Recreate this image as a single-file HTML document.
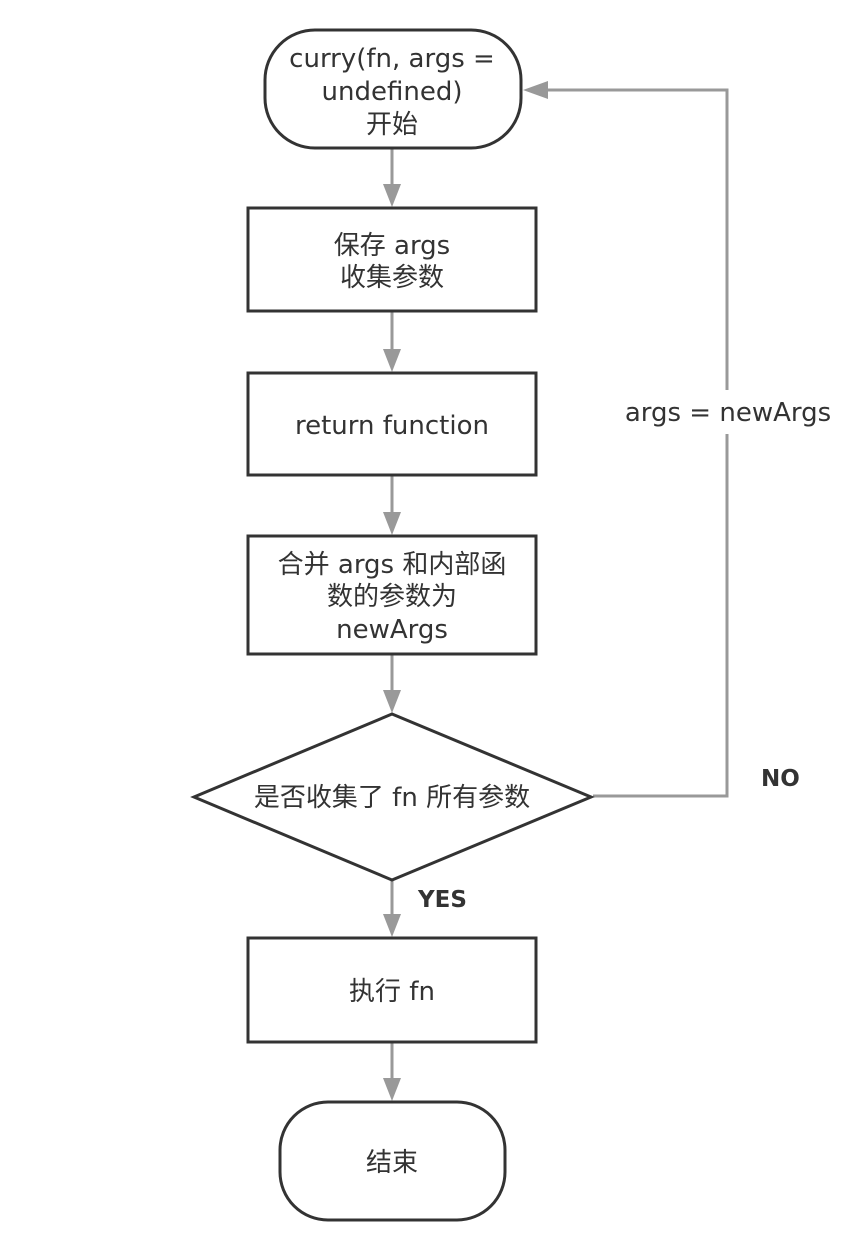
<!DOCTYPE html>
<html><head><meta charset="utf-8"><style>
body{margin:0;background:#fff;}
svg text{font-family:"DejaVu Sans","Noto Sans CJK SC",sans-serif;font-size:26px;fill:#333;}
</style></head><body>
<svg width="848" height="1246" viewBox="0 0 848 1246" xmlns="http://www.w3.org/2000/svg">
<g fill="none" stroke="#999" stroke-width="3">
<line x1="392" y1="148" x2="392" y2="186"/>
<line x1="392" y1="311" x2="392" y2="351"/>
<line x1="392" y1="475" x2="392" y2="514"/>
<line x1="392" y1="654" x2="392" y2="692"/>
<line x1="392" y1="880" x2="392" y2="916"/>
<line x1="392" y1="1042" x2="392" y2="1080"/>
<polyline points="593,796 727,796 727,90 545,90"/>
</g>
<g fill="#999">
<polygon points="383,184 401,184 392,207"/>
<polygon points="383,349 401,349 392,372"/>
<polygon points="383,512 401,512 392,535"/>
<polygon points="383,690 401,690 392,713"/>
<polygon points="383,914 401,914 392,937"/>
<polygon points="383,1078 401,1078 392,1101"/>
<polygon points="548,81 548,99 523,90"/>
</g>
<rect x="618" y="390" width="220" height="44" fill="#fff"/>
<g fill="#fff" stroke="#333" stroke-width="3">
<rect x="265" y="30" width="256" height="118" rx="50"/>
<rect x="248" y="208" width="288" height="103"/>
<rect x="248" y="373" width="288" height="102"/>
<rect x="248" y="536" width="288" height="118"/>
<polygon points="194,797 392,714 591,797 392,880"/>
<rect x="248" y="938" width="288" height="104"/>
<rect x="280" y="1102" width="225" height="118" rx="48"/>
</g>
<g text-anchor="middle">
<text x="392" y="67">curry(fn, args =</text>
<text x="392" y="100">undefined)</text>
<text x="392" y="133">开始</text>
<text x="392" y="254">保存 args</text>
<text x="392" y="286">收集参数</text>
<text x="392" y="434">return function</text>
<text x="392" y="573">合并 args 和内部函</text>
<text x="392" y="605">数的参数为</text>
<text x="392" y="638">newArgs</text>
<text x="392" y="806">是否收集了 fn 所有参数</text>
<text x="392" y="1000">执行 fn</text>
<text x="392" y="1171">结束</text>
<text x="728" y="421">args = newArgs</text>
</g>
<text x="761" y="786" style="font-weight:bold;font-size:23px">NO</text>
<text x="418" y="907" style="font-weight:bold;font-size:23px">YES</text>
</svg>
</body></html>
